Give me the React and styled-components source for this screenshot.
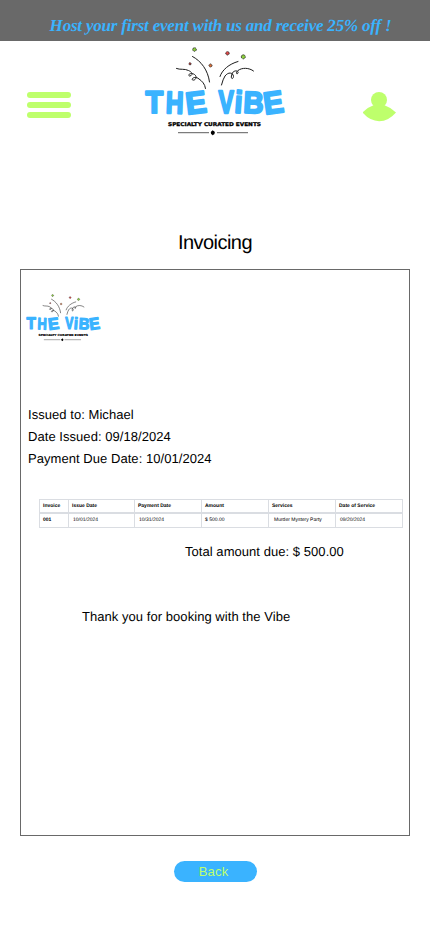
import React from 'react';
import styled, { createGlobalStyle } from 'styled-components';

const Global = createGlobalStyle`
  * { box-sizing: border-box; }
  body {
    margin: 0;
    background: #fff;
    color: #000;
    font-family: "Liberation Sans", Arial, sans-serif;
    text-rendering: geometricPrecision;
  }
`;

const Page = styled.div`
  width: 430px;
  height: 932px;
  display: flex;
  flex-direction: column;
  background: #fff;
  overflow: hidden;
`;

const Banner = styled.div`
  height: 41px;
  flex: none;
  padding: 11px 0 0 11px;
  background: #696969;
  color: #3ab3ff;
  text-align: center;
  font: italic bold 17px/30px "Liberation Serif", serif;
  letter-spacing: -0.2px;
  white-space: nowrap;
`;

const Header = styled.header`
  height: 100px;
  flex: none;
  display: flex;
  align-items: flex-start;
  padding: 0 33px 0 27px;
`;

const MenuButton = styled.button`
  display: flex;
  flex-direction: column;
  gap: 4px;
  width: 44px;
  margin: 51px 64px 0 0;
  padding: 0;
  border: 0;
  background: none;
`;

const MenuBar = styled.span`
  height: 6px;
  width: 44px;
  border-radius: 3px;
  background: #beff6c;
`;

const LogoSvg = styled.svg`
  display: block;
  flex: none;
  width: ${(p) => p.$width}px;
  height: ${(p) => p.$width * 0.625}px;
`;

const Lettering = styled.text`
  font: bold 31px "Liberation Sans", Arial, sans-serif;
  fill: #3ab3ff;
  stroke: #3ab3ff;
  stroke-width: 2.2px;
  stroke-linejoin: round;
`;

const Tagline = styled.text`
  font: bold 5.2px "DejaVu Sans", sans-serif;
  fill: #000;
  stroke: #000;
  stroke-width: 0.3px;
`;

const Profile = styled.svg`
  width: 34px;
  height: 30px;
  margin: 51px 0 0 auto;
  fill: #beff6c;
`;

const Title = styled.h1`
  margin: 90px 0 0;
  text-align: center;
  font-size: 20px;
  font-weight: 400;
  line-height: 24px;
  letter-spacing: -0.55px;
`;

const Invoice = styled.main`
  flex: none;
  width: 390px;
  height: 567px;
  margin: 14px 20px 0;
  padding-top: 21px;
  border: 1px solid #696969;
`;

const Details = styled.div`
  margin: 60px 0 0 7px;
`;

const Line = styled.p`
  margin: 0 0 0 ${(p) => p.$indent || 0}px;
  font-size: 13px;
  line-height: 22px;
  letter-spacing: 0.05px;
`;

const Table = styled.div`
  width: 364px;
  margin: 29px 0 13px 18px;
  border: 1px solid #dadde2;
  font-size: 5px;
`;

const Row = styled.div`
  display: grid;
  grid-template-columns: 29px 66px 67px 67px 67px 66px;
  height: ${(p) => (p.$head ? 14 : 13)}px;
  line-height: ${(p) => (p.$head ? 12 : 12)}px;
  font-weight: ${(p) => (p.$head ? 700 : 400)};
  border-bottom: ${(p) => (p.$head ? '2px solid #dadde2' : '0')};
`;

const Cell = styled.div`
  padding-left: ${(p) => p.$pad}px;
  font-weight: ${(p) => (p.$strong ? 700 : 'inherit')};
  white-space: nowrap;
  border-right: 1px solid #dadde2;
  &:last-child { border-right: 0; }
`;

const Spacer = styled.div`
  height: 43px;
`;

const BackButton = styled.button`
  align-self: center;
  flex: none;
  width: 83px;
  height: 21px;
  margin: 25px 0 0 1px;
  padding: 0 4px 0 0;
  border: 0;
  border-radius: 11px;
  background: #3ab3ff;
  color: #beff6c;
  font: 13px/21px "Liberation Sans", Arial, sans-serif;
  letter-spacing: 0.2px;
`;

const letters = [
  ['T', 10.5, 72, 0.93, 1.02, 0],
  ['H', 30.5, 72, 0.79, 1, 2],
  ['E', 52, 73.5, 1, 1, -7],
  ['V', 83.5, 72, 0.74, 1.04, 0],
  ['i', 99, 71.5, 0.9, 1, 4],
  ['B', 108, 71.5, 0.9, 0.98, 3],
  ['E', 130, 73.5, 0.96, 1, -8],
];

const confetti = [
  [59.5, 8.5, '#8ed13f', 1.8],
  [92.5, 12.3, '#e34a4a', 1.7],
  [108.3, 15.8, '#8ed13f', 2],
  [55, 22.8, '#cc4141', 1.1],
  [75.5, 24.5, '#e87339', 1.5],
];

function Logo({ width }) {
  return (
    <LogoSvg $width={width} viewBox="0 0 160 100" role="img" aria-label="The Vibe">
      <g fill="none" stroke="#1c1c1c" strokeWidth="1" strokeLinecap="round">
        <path d="M57.500 15.500C66 20 73 29 74.500 41" />
        <path d="M41.500 27.500C45 29 50 27.500 53.500 29.500C59 32 57 35 54.500 35C52 34 56 31 59.500 33.500C63 36 60 40 57.500 39C56 37 61 35 64 38C67 40 70 43 70.500 47.500" />
        <path d="M103 20.500C94 23 87 29 85 35.500" />
        <path d="M118.500 30C114 26.500 107 26.500 103 29.500C100 32 102 34 103 32C104 29 98 29 97 33C95 38 98 39 98.500 35.500C98 31 93 31 90 35Q88 38 86.500 44" />
      </g>
      {confetti.map(([x, y, color, r]) => (
        <circle key={x} cx={x} cy={y} r={r} fill={color} stroke="#222" strokeWidth="0.9" strokeDasharray="1.4 0.5" />
      ))}
      {letters.map(([char, x, y, sx, sy, angle]) => (
        <Lettering key={x} transform={`translate(${x} ${y}) rotate(${angle}) scale(${sx} ${sy})`}>{char}</Lettering>
      ))}
      <Tagline x="33" y="85" textLength="93" lengthAdjust="spacingAndGlyphs">SPECIALTY CURATED EVENTS</Tagline>
      <path d="M43 91.700H74M82 91.700H113" stroke="#333" strokeWidth="0.8" />
      <circle cx="77.800" cy="91.700" r="2" />
      <path d="M77.800 89l1.500 2.700-1.500 2.700-1.500-2.700z" />
    </LogoSvg>
  );
}

const headings = ['Invoice', 'Issue Date', 'Payment Date', 'Amount', 'Services', 'Date of Service'];
const values = ['001', '10/01/2024', '10/31/2024', '$ 500.00', 'Murder Mystery Party', '09/20/2024'];
const valuePads = [3, 4, 4, 3, 5, 4];

export default function App() {
  return (
    <Page>
      <Global />
      <Banner>Host your first event with us and receive 25% off !</Banner>
      <Header>
        <MenuButton aria-label="Menu"><MenuBar /><MenuBar /><MenuBar /></MenuButton>
        <Logo width={160} />
        <Profile viewBox="0 0 34 30" aria-label="Profile">
          <circle cx="16" cy="8" r="8" />
          <path d="M-0.500 20.500Q4 15.500 10 13.500H22Q28 15.500 33 20.500Q25.500 29.200 16.200 29.200T-0.500 20.500Z" />
        </Profile>
      </Header>
      <Title>Invoicing</Title>
      <Invoice>
        <Logo width={85} />
        <Details>
          <Line>Issued to: Michael</Line>
          <Line>Date Issued: 09/18/2024</Line>
          <Line>Payment Due Date: 10/01/2024</Line>
        </Details>
        <Table>
          <Row $head>{headings.map((h) => <Cell key={h} $pad={3}>{h}</Cell>)}</Row>
          <Row>{values.map((v, i) => <Cell key={v} $pad={valuePads[i]} $strong={i === 0}>{v}</Cell>)}</Row>
        </Table>
        <Line $indent={164}>Total amount due: $ 500.00</Line>
        <Spacer />
        <Line $indent={61}>Thank you for booking with the Vibe</Line>
      </Invoice>
      <BackButton>Back</BackButton>
    </Page>
  );
}
